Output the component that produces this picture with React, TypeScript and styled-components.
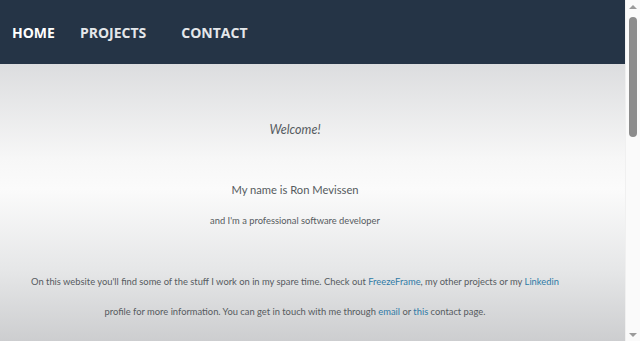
import styled, { createGlobalStyle } from 'styled-components';

const GlobalStyle = createGlobalStyle`
  html, body {
    margin: 0;
    padding: 0;
  }
  body {
    font-family: Lato, "Open Sans", sans-serif;
    background: #c6c7c9;
  }
`;

const Header = styled.header`
  height: 64px;
  background: #253446;
  display: flex;
  align-items: center;
  padding-left: 12px;
`;

const NavList = styled.ul`
  display: flex;
  list-style: none;
  margin: 0;
  padding: 0;
`;

const NavItem = styled.li<{ active?: boolean; gap: number }>`
  margin-right: ${(p) => p.gap}px;
  a {
    color: ${(p) => (p.active ? '#ffffff' : '#e4e7ea')};
    text-decoration: none;
    font-family: "Open Sans", sans-serif;
    font-weight: 700;
    font-size: 14px;
  }
`;

const Main = styled.main`
  min-height: 808px;
  background: linear-gradient(
    to bottom,
    #dcdddf 0px,
    #f7f7f7 95px,
    #fbfbfb 125px,
    #e6e7e8 205px,
    #c8c9cb 290px,
    #c6c7c9 808px
  );
`;

const Intro = styled.section`
  width: 590px;
  text-align: center;
  color: #565b60;
  padding-top: 56px;
`;

const Welcome = styled.h2`
  margin: 0;
  font-size: 12.5px;
  font-style: italic;
  font-weight: 400;
  line-height: 20px;
`;

const Name = styled.p`
  margin: 40px 0 0;
  font-size: 11.2px;
  line-height: 20px;
`;

const Sub = styled.p`
  margin: 11px 0 0;
  font-size: 9.35px;
  line-height: 20px;
`;

const Body = styled.p`
  margin: 36px 0 0;
  font-size: 9.36px;
  line-height: 29.5px;
  a {
    color: #2f7aa6;
    text-decoration: none;
  }
`;

// the reference shows a classic scrollbar on the right edge
const ScrollBar = styled.div`
  position: fixed;
  top: 0;
  right: 0;
  width: 15px;
  height: 100vh;
  background: #fafafa;
  border-left: 1px solid #f0f0f0;
  box-sizing: border-box;
`;

const ScrollThumb = styled.div`
  position: absolute;
  top: 17px;
  left: 3px;
  width: 8px;
  height: 120px;
  border-radius: 4px;
  background: #8c8c8c;
`;

const Arrow = styled.div<{ down?: boolean }>`
  position: absolute;
  left: 3px;
  ${(p) => (p.down ? 'bottom: 4px;' : 'top: 5px;')}
  width: 0;
  height: 0;
  border-left: 4px solid transparent;
  border-right: 4px solid transparent;
  ${(p) => (p.down ? 'border-top: 4px solid #9a9a9a;' : 'border-bottom: 4px solid #9a9a9a;')}
`;

const nav = [
  { title: 'HOME', gap: 25, active: true },
  { title: 'PROJECTS', gap: 35 },
  { title: 'CONTACT', gap: 0 },
];

const App = () => {
  return (
    <>
      <GlobalStyle />
      <Header>
        <nav>
          <NavList>
            {nav.map((item, i) => (
              <NavItem key={i} active={item.active} gap={item.gap}>
                <a href="#">{item.title}</a>
              </NavItem>
            ))}
          </NavList>
        </nav>
      </Header>
      <Main>
        <Intro>
          <Welcome>Welcome!</Welcome>
          <Name>My name is Ron Mevissen</Name>
          <Sub>and I'm a professional software developer</Sub>
          <Body>
            On this website you'll find some of the stuff I work on in my spare time. Check out{' '}
            <a href="#">FreezeFrame</a>, my other projects or my <a href="#">Linkedin</a>
            <br />
            profile for more information. You can get in touch with me through <a href="#">email</a> or{' '}
            <a href="#">this</a> contact page.
          </Body>
        </Intro>
      </Main>
      <ScrollBar>
        <Arrow />
        <ScrollThumb />
        <Arrow down />
      </ScrollBar>
    </>
  );
};

export default App;
